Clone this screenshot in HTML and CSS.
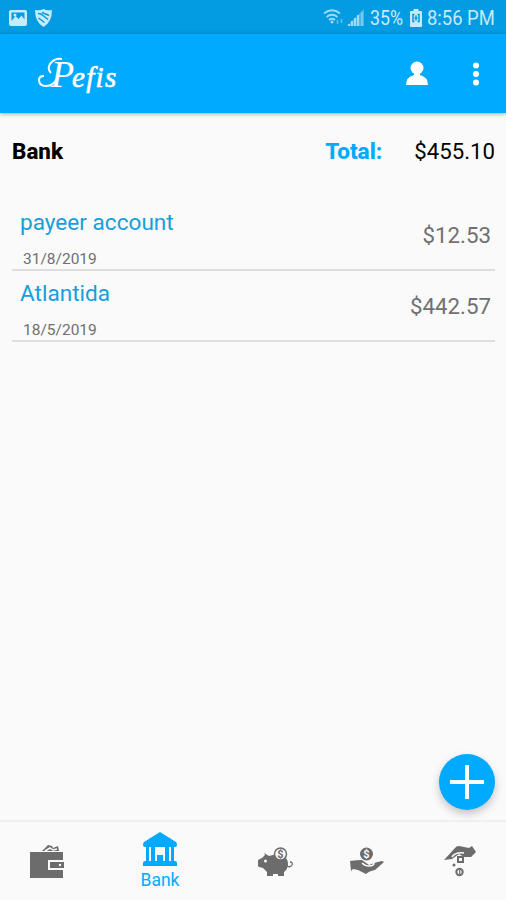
FILE: index.html
```html
<!doctype html>
<html lang="en">
<head>
  <meta charset="UTF-8" />
  <meta name="viewport" content="width=device-width, initial-scale=1.0" />
  <title>Pefis - Bank</title>
  <link rel="stylesheet" href="styles.css">
</head>
<body>
  <div class="app">
    <div class="status-bar">
      <svg class="status-photo" width="18" height="16" viewBox="0 0 18 16">
        <path fill="currentColor" fill-rule="evenodd" d="M2 0h14q2 0 2 2v12q0 2-2 2H2q-2 0-2-2V2Q0 0 2 0zM2.500 2.500V11L6.500 6l3 3 3-3.500 3 4V2.500z" />
        <circle cx="6" cy="5" r="1.500" fill="currentColor" />
      </svg>
      <svg class="status-shield" width="17" height="18" viewBox="0 0 17 18">
        <path fill="currentColor" d="M0 1Q5 2 8.500 0 12 2 17 1 17 13 8.500 18 0 13 0 1z" />
        <path class="cutout" d="M3 4.500q3 0 5 2l5 4M7 3.500l7 3M3.500 9l6 4.500" />
      </svg>
      <div class="status-right">
        <svg width="21" height="17" viewBox="0 0 21 17" fill="none" stroke="currentColor" stroke-width="1.700" opacity=".8">
          <path d="M1 4.500Q9 -2 17 4.500M3.500 8Q9 3.500 14.500 8M6 11Q9 8.500 12 11" />
          <circle cx="9" cy="13" r="1.500" fill="currentColor" stroke="none" />
          <path d="M14.500 15v-4M18.500 10v4" opacity=".55" />
        </svg>
        <svg class="status-signal" width="17" height="17" viewBox="0 0 17 17" fill="currentColor" opacity=".8">
          <path opacity=".45" d="M17 0v17H0z" />
          <path d="M1 15h2v2H1zM4 12h2v5H4zM7 9h2v8H7zM10 6h2v11h-2z" />
          <path opacity=".5" d="M14 3h2v14h-2z" />
        </svg>
        <span class="status-percent">35%</span>
        <svg class="status-battery" width="12" height="18" viewBox="0 0 12 18">
          <path fill="currentColor" d="M3.500 0h5v2H11q1 0 1 1v14q0 1-1 1H1q-1 0-1-1V3q0-1 1-1h2.500z" />
          <path class="cutout" d="M4.500 5.500H3v7h1.500M7.500 5.500H9v7H7.500M6 6.500v5M4.500 9h3" />
        </svg>
        <span class="status-time">8:56 PM</span>
      </div>
    </div>

    <header>
      <h1 class="logo">
        <svg class="logo-swash" width="37" height="32" viewBox="0 0 37 32">
          <path d="M13 16Q9 12 12 7 16 1 24 2M20 20Q16 29 8 29 1 29 1 23q0-4 5-4" />
        </svg>
        <span class="logo-initial">P</span><span class="logo-rest">efis</span>
      </h1>
      <button class="icon-btn user-btn" aria-label="Profile">
        <svg width="22" height="24" viewBox="0 0 22 24" fill="currentColor">
          <circle cx="11" cy="7" r="6.500" />
          <path d="M8 11h6v3q8 2 8 10H0q0-8 8-10z" />
        </svg>
      </button>
      <button class="icon-btn" aria-label="More options">
        <svg width="6" height="24" viewBox="0 0 6 24" fill="currentColor">
          <circle cx="3" cy="3.500" r="3" />
          <circle cx="3" cy="12" r="3" />
          <circle cx="3" cy="20.500" r="3" />
        </svg>
      </button>
    </header>

    <main>
      <div class="summary">
        <h2>Bank</h2>
        <span class="total-label">Total:</span>
        <span class="total">$455.10</span>
      </div>

      <ul class="accounts">
        <li>
          <div>
            <div class="account-name">payeer account</div>
            <div class="account-date">31/8/2019</div>
          </div>
          <span class="amount">$12.53</span>
        </li>
        <li>
          <div>
            <div class="account-name">Atlantida</div>
            <div class="account-date">18/5/2019</div>
          </div>
          <span class="amount">$442.57</span>
        </li>
      </ul>
    </main>

    <nav>
      <a class="nav-item">
        <svg width="34" height="34" viewBox="0 0 34 34" fill="currentColor">
          <path d="M12 7l6-6 4 1 1 2 5-2 1 5z" />
          <path class="line" d="M15 7l5-3 3 2 4-1" />
          <path d="M0 8h33v8H18v10h15v8H0z" />
          <path d="M20 18h14v6H20z" />
          <circle class="hole" cx="30" cy="21" r="1.200" />
        </svg>
      </a>
      <a class="nav-item active">
        <svg width="34" height="35" viewBox="0 0 34 35" fill="currentColor">
          <path d="M17 0l16 10q1 1 1 3 0 2-2 2H2q-2 0-2-2 0-2 1-3z" />
          <path d="M3 15h3v14H3zM8 15h4v14H8zM22 15h4v14h-4zM28 15h3v14h-3zM14 23h6v6h-6z" />
          <path d="M2 29h30q2 0 2 2v3H0v-3q0-2 2-2z" />
        </svg>
        <span>Bank</span>
      </a>
      <a class="nav-item">
        <svg class="piggy" width="35" height="32" viewBox="0 0 35 32" fill="currentColor">
          <path d="M6 6l5 3q6-2 11-1 8 2 8 9 0 5-4 8v4h-6v-2h-5v2H9v-4l-4-4-4-1-1-1v-6l4-2 3-3z" />
          <path d="M29 19q3 2 5-1 1-3-2-3" fill="none" stroke="currentColor" stroke-width="1.300" />
          <circle class="hole" cx="7.500" cy="14" r="1.500" />
          <circle class="coin" cx="22.500" cy="7" r="6" />
          <text class="coin-text" x="22.500" y="11">$</text>
        </svg>
      </a>
      <a class="nav-item">
        <svg class="hand-up" width="34" height="27" viewBox="0 0 34 27" fill="currentColor">
          <path d="M0 14q7-1 12-1l7 5q7-3 13-4l2 1-9 8q-6 1-9 4l-8-4-5-1-2 2z" />
          <path class="line" d="M12 16q3 3 7 3 5 0 5-3" />
          <circle cx="16.500" cy="7" r="6.500" />
          <text class="coin-text light" x="16.500" y="11">$</text>
        </svg>
      </a>
      <a class="nav-item">
        <svg width="32" height="34" viewBox="0 0 32 34" fill="currentColor">
          <path d="M0 16L11 4q1-2 4-2l10 2 3-2 4 6-5 5h-7l-5-3-7 5z" />
          <path class="line" d="M8 13q3-5 12-4" />
          <rect x="14" y="13" width="5" height="5" fill="var(--background-color)" stroke="currentColor" stroke-width="2" />
          <circle cx="10" cy="21" r="1.500" />
          <circle cx="15.500" cy="28" r="3.200" fill="none" stroke="currentColor" stroke-width="2" />
          <path d="M15 26h1.300v4H15z" />
        </svg>
      </a>
    </nav>

    <button class="fab" aria-label="Add account">
      <svg width="34" height="34" viewBox="0 0 34 34">
        <path d="M17 0v34M0 17h34" stroke="currentColor" stroke-width="4" />
      </svg>
    </button>
  </div>
</body>
</html>
```

FILE: styles.css
```css
:root {
  --primary-color: #00aaff;
  --status-color: #039be1;
  --background-color: #fafafa;
  --icon-color: #6c6c6c;
}

* {
  box-sizing: border-box;
}

body {
  margin: 0;
  font-family: Roboto, sans-serif;
  background-color: var(--background-color);
  color: #111;
}

svg {
  display: block;
  flex-shrink: 0;
}

button {
  border: none;
  padding: 0;
  background: none;
  color: inherit;
  cursor: pointer;
}

.app {
  position: relative;
  display: flex;
  flex-direction: column;
  height: 900px;
  overflow: hidden;
}

.status-bar {
  display: flex;
  align-items: center;
  height: 34px;
  padding: 1px 11px 0 9px;
  background-color: var(--status-color);
  color: #c6ebfc;
}

.status-shield {
  margin-left: 8px;
}

.cutout {
  fill: none;
  stroke: var(--status-color);
  stroke-width: 1.5;
}

.status-right {
  display: flex;
  align-items: center;
  margin-left: auto;
  font-size: 20px;
}

.status-signal {
  margin-left: 3px;
}

.status-percent,
.status-time {
  white-space: nowrap;
  transform: scaleX(0.92);
  transform-origin: left;
}

.status-percent {
  width: 34px;
  margin-left: 6px;
  transform: scaleX(0.89);
}

.status-battery {
  margin-left: 6px;
}

.status-time {
  width: 68px;
  margin-left: 5px;
}

header {
  display: flex;
  align-items: center;
  height: 79px;
  padding: 0 27px 0 38px;
  background-color: var(--primary-color);
  color: #fff;
  box-shadow: 0 1px 4px rgba(0, 0, 0, 0.35);
}

.logo {
  position: relative;
  display: flex;
  align-items: baseline;
  margin: 3px auto 0 0;
  padding-left: 13px;
  font-family: "Liberation Serif", serif;
  font-style: italic;
  font-weight: normal;
  line-height: 40px;
}

.logo-swash {
  position: absolute;
  top: 3px;
  left: 0;
  fill: none;
  stroke: currentColor;
  stroke-width: 2;
}

.logo-initial {
  width: 21px;
  font-size: 38px;
}

.logo-rest {
  font-size: 29px;
  letter-spacing: 1.3px;
  -webkit-text-stroke: 0.6px currentColor;
}

.user-btn {
  margin: -2px 45px 0 0;
}

main {
  flex: 1;
  padding: 0 11px 0 12px;
}

.summary {
  display: flex;
  align-items: baseline;
  height: 77px;
  padding-top: 25px;
  color: #000;
  font-size: 22.2px;
}

.summary h2 {
  margin: 0 auto 0 0;
  font-size: 22.4px;
  font-weight: 800;
}

.total-label {
  margin-right: 32px;
  color: var(--primary-color);
  font-size: 22.6px;
  font-weight: 800;
}

.accounts {
  margin: 10px 0 0;
  padding: 0;
  list-style: none;
}

.accounts li {
  display: flex;
  align-items: flex-end;
  justify-content: space-between;
  height: 71px;
  padding: 0 4px 0 8px;
  border-bottom: 2px solid #dedede;
}

.account-name {
  color: #159fdc;
  font-size: 22.6px;
  line-height: 30px;
}

.account-date {
  margin: 10px 0 -1px 3px;
  color: #6f6f6f;
  font-size: 15.5px;
  line-height: 22px;
}

.amount {
  margin-bottom: 19px;
  color: #707070;
  font-size: 22.3px;
  line-height: 30px;
}

nav {
  display: flex;
  height: 80px;
  border-top: 2px solid #f0f0f0;
}

.nav-item {
  display: flex;
  flex: 0 0 93px;
  flex-direction: column;
  align-items: center;
  justify-content: center;
  color: var(--icon-color);
}

.nav-item.active {
  flex-basis: 134px;
  color: var(--primary-color);
  font-size: 17.5px;
  line-height: 22px;
}

.active span {
  margin-top: 2px;
}

.piggy {
  margin: 3px 0 0 3px;
}

.hand-up {
  margin: 0 0 1px 1px;
}

.line {
  fill: none;
  stroke: var(--background-color);
  stroke-width: 1.5;
}

.hole {
  fill: var(--background-color);
}

.coin {
  fill: var(--background-color);
  stroke: currentColor;
  stroke-width: 1.5;
}

.coin-text {
  font-size: 11px;
  font-weight: bold;
  text-anchor: middle;
}

.coin-text.light {
  fill: var(--background-color);
}

.fab {
  position: absolute;
  right: 11px;
  bottom: 90px;
  display: flex;
  align-items: center;
  justify-content: center;
  width: 56px;
  height: 56px;
  border-radius: 50%;
  background-color: var(--primary-color);
  color: #fff;
  box-shadow: 0 4px 8px rgba(0, 0, 0, 0.22);
}
```
